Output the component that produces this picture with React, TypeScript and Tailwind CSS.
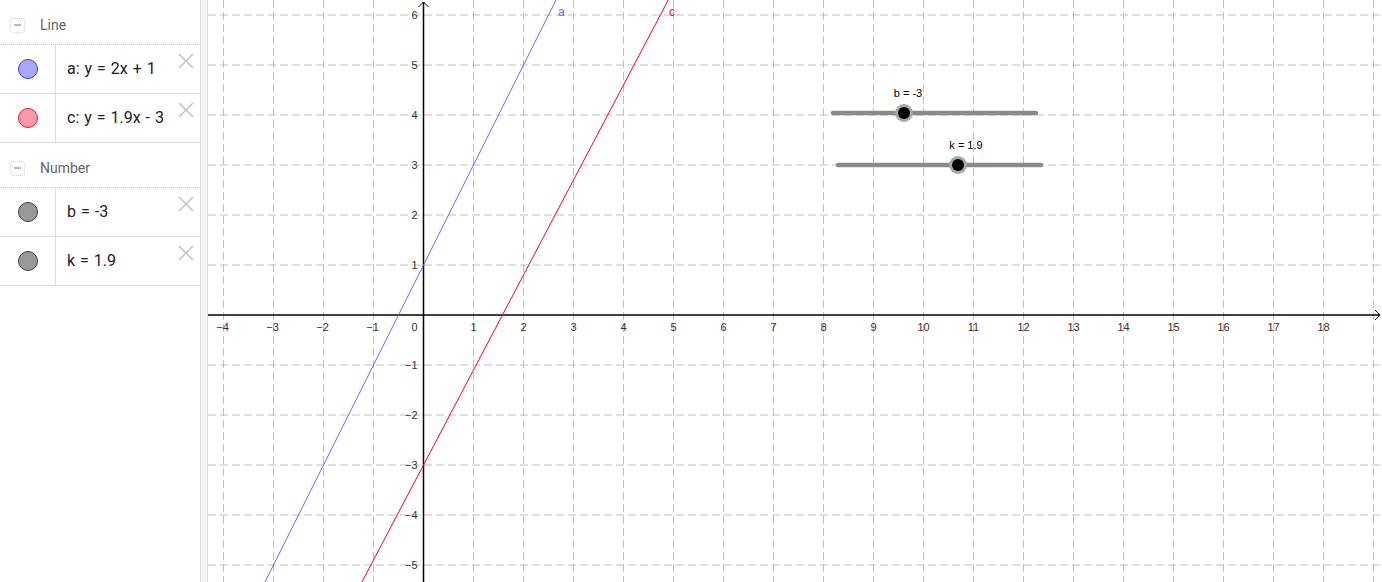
import React from 'react';

type Item = { label: string; fill: string; stroke: string };

const groups: { title: string; items: Item[] }[] = [
  {
    title: 'Line',
    items: [
      { label: 'a: y = 2x + 1', fill: '#a8a8ff', stroke: '#3c3cf0' },
      { label: 'c: y = 1.9x - 3', fill: '#ff98a8', stroke: '#f0143c' },
    ],
  },
  {
    title: 'Number',
    items: [
      { label: 'b = -3', fill: '#999999', stroke: '#404040' },
      { label: 'k = 1.9', fill: '#999999', stroke: '#404040' },
    ],
  },
];

const OX = 423.5;
const OY = 315;
const U = 50;
const px = (x: number) => OX + U * x;
const py = (y: number) => OY - U * y;

const AlgebraRow = ({ item }: { item: Item }) => (
  <div className="relative flex h-[49px] border-b border-[#dddddd]">
    <div className="flex w-[56px] items-center justify-center border-r border-[#dddddd]">
      <span
        className="block h-[20px] w-[20px] rounded-full border"
        style={{ background: item.fill, borderColor: item.stroke }}
      />
    </div>
    <div className="flex flex-1 items-center pl-[11px] text-[16px] text-[#222] [word-spacing:1px]">{item.label}</div>
    <svg className="absolute right-[6px] top-[8px]" width="16" height="16" viewBox="0 0 16 16">
      <path d="M1 1L15 15M15 1L1 15" stroke="#c4c4c4" strokeWidth="1.6" fill="none" />
    </svg>
  </div>
);

const GroupHeader = ({ title }: { title: string }) => (
  <div className="flex h-[45px] items-center border-b border-dotted border-[#cccccc] pl-[10px] pt-[6px]">
    <span className="flex h-[15px] w-[15px] items-center justify-center rounded-[3px] border border-dotted border-[#cfcfcf]">
      <span className="block h-[1.5px] w-[7px] bg-[#bbbbbb]" />
    </span>
    <span className="ml-[15px] text-[14px] text-[#666666]">{title}</span>
  </div>
);

const Graph = () => {
  const vx: number[] = [];
  for (let k = -4; k <= 19; k++) vx.push(k);
  const hy: number[] = [];
  for (let k = -5; k <= 6; k++) hy.push(k);
  const labelStyle = { fontFamily: '"Liberation Sans", Arial, sans-serif', fontSize: 11 };

  return (
    <svg width="1174" height="582" viewBox="208 0 1174 582" className="block">
      <rect x="208" y="0" width="1174" height="582" fill="#ffffff" />
      <g stroke="#c0c0c0" strokeWidth="1" strokeDasharray="8 4">
        {vx.map((k) => (k === 0 ? null : <line key={'v' + k} x1={px(k)} y1={0} x2={px(k)} y2={582} />))}
        {hy.map((k) => (k === 0 ? null : <line key={'h' + k} x1={208} y1={py(k)} x2={1382} y2={py(k)} />))}
      </g>
      {/* axes */}
      <g stroke="#000" strokeWidth="1.5" fill="none">
        <line x1={208} y1={OY} x2={1380} y2={OY} />
        <path d={`M1375 ${OY - 5}L1380 ${OY}L1375 ${OY + 5}`} strokeWidth="1" />
        <line x1={OX} y1={582} x2={OX} y2={2} />
        <path d={`M${OX - 5} 7L${OX} 2L${OX + 5} 7`} strokeWidth="1" />
      </g>
      <g fill="#333" style={labelStyle}>
        {vx
          .filter((k) => k !== 0 && k !== 19)
          .map((k) => (
            <text key={'xl' + k} x={k < 0 ? px(k) - 1 : px(k)} y={OY + 16} textAnchor="middle">
              {k < 0 ? '\u2212' + -k : k}
            </text>
          ))}
        <text x={OX - 6} y={OY + 16} textAnchor="end">0</text>
        {hy
          .filter((k) => k !== 0)
          .map((k) => (
            <text key={'yl' + k} x={OX - 6} y={py(k) + 4} textAnchor="end">
              {k < 0 ? '\u2212' + -k : k}
            </text>
          ))}
      </g>
      {/* lines */}
      <line x1={px(-3.5)} y1={py(2 * -3.5 + 1)} x2={px(3)} y2={py(7)} stroke="#6666ff" strokeWidth="1" />
      <line x1={px(-1.5)} y1={py(1.9 * -1.5 - 3)} x2={px(5.2)} y2={py(1.9 * 5.2 - 3)} stroke="#ff0033" strokeWidth="1" />
      <text x={558} y={16} fill="#6666ff" style={{ ...labelStyle, fontSize: 12 }}>a</text>
      <text x={669} y={16} fill="#ff0033" style={{ ...labelStyle, fontSize: 12 }}>c</text>
      {/* sliders */}
      <g>
        <line x1={833} y1={113} x2={1036} y2={113} stroke="#8a8a8a" strokeWidth="4.5" strokeLinecap="round" />
        <circle cx={904} cy={113} r={9} fill="#a8a8a8" />
        <circle cx={904} cy={113} r={6} fill="#000" />
        <text x={908} y={97} textAnchor="middle" fill="#000" style={labelStyle}>b = -3</text>
        <line x1={838} y1={165} x2={1041} y2={165} stroke="#8a8a8a" strokeWidth="4.5" strokeLinecap="round" />
        <circle cx={958} cy={165} r={9} fill="#a8a8a8" />
        <circle cx={958} cy={165} r={6} fill="#000" />
        <text x={966} y={149} textAnchor="middle" fill="#000" style={labelStyle}>k = 1.9</text>
      </g>
    </svg>
  );
};

const App = () => {
  return (
    <div className="flex h-[582px] w-[1382px] overflow-hidden bg-white font-['Roboto',sans-serif]">
      <div className="w-[200px] shrink-0">
        {groups.map((g) => (
          <div key={g.title}>
            <GroupHeader title={g.title} />
            {g.items.map((it) => (
              <AlgebraRow key={it.label} item={it} />
            ))}
          </div>
        ))}
      </div>
      <div className="w-[8px] shrink-0 border-x border-[#dcdcdc] bg-[#f3f3f3]" />
      <Graph />
    </div>
  );
};

export default App;
